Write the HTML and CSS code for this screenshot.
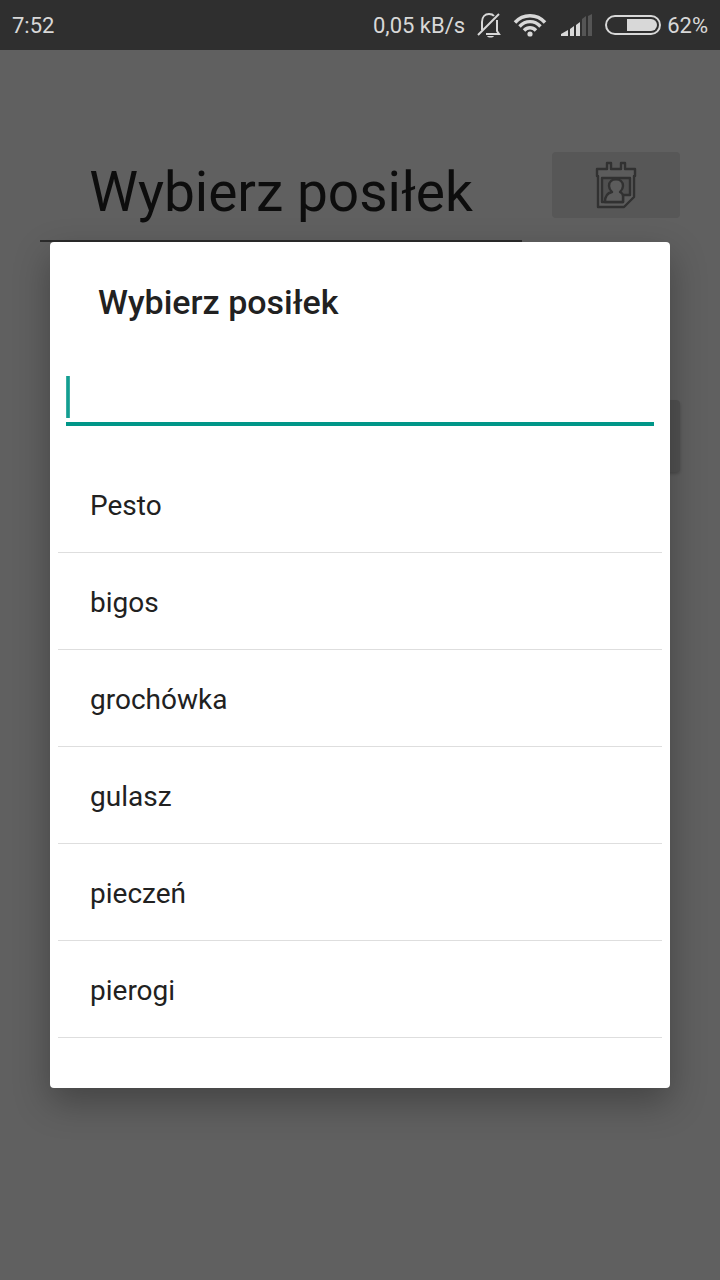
FILE: index.html
```html
<!DOCTYPE html>
<html lang="pl">
<head>
<meta charset="utf-8">
<meta name="viewport" content="width=device-width, initial-scale=1">
<title>Wybierz posiłek</title>
<link rel="stylesheet" href="styles.css">
</head>
<body>
<div class="screen">
  <header class="status">
    <span>7:52</span>
    <div class="status-right">
      <span>0,05 kB/s</span>
      <svg class="bell" width="26" height="26" viewBox="0 0 26 26" fill="none" stroke="#d8d8d8" stroke-width="2">
        <path d="M5 18V10C5 5 8 2 12 2c2 0 4 .6 5 2M20 8v11l2 3H9M1 23 22 2"/>
        <path d="M10 24h7c-1 2-6 2-7 0z" fill="#d8d8d8" stroke="none"/>
      </svg>
      <svg class="wifi" width="34" height="24" viewBox="0 0 34 24" fill="none" stroke="#d8d8d8" stroke-width="3.400">
        <path d="M2 9.500C10 .5 24 .5 32 9.500M6.500 13.500c6-6.500 15-6.500 21 0M11 17.500c3.500-3.700 8.500-3.700 12 0"/>
        <circle cx="17" cy="21" r="2.600" fill="#d8d8d8" stroke="none"/>
      </svg>
      <svg class="signal" width="32" height="22" viewBox="0 0 32 22">
        <path d="M0 22v-2l7-4v6zM9 22v-7l4-3v10zM15 22V11l4-3v14z" fill="#d8d8d8"/>
        <path d="M21 22V5l4-3v20zM27 22V2l4-2v22z" fill="#555"/>
      </svg>
      <svg class="battery" width="56" height="20" viewBox="0 0 56 20">
        <rect x="1" y="1" width="54" height="18" rx="9" fill="none" stroke="#d8d8d8" stroke-width="2"/>
        <path d="M22 4h24a6 6 0 0 1 0 12H22z" fill="#d8d8d8"/>
      </svg>
      <span>62%</span>
    </div>
  </header>

  <main class="page">
    <div class="meal-row">
      <input class="meal" type="text" value="Wybierz posiłek" aria-label="Posiłek" readonly>
      <button class="pick" type="button" aria-label="Wybierz datę">
        <svg width="42" height="50" viewBox="0 0 42 50" fill="none" stroke="#313131" stroke-width="2.400" stroke-linejoin="round">
          <path d="M2 9h10V3h4v6h10V3h4v6h10v7h-1v21l-10 10H3V16H2z" fill="#5c5c5c"/>
          <path d="M7 18h28v17h-7v7H7z" fill="#505050"/>
          <path d="M10 42c0-5 2-9 7-10-2-2-3-4-3-6 0-9 14-9 14 0 0 2-1 4-3 6 2 1 3 2 3 4v6z" fill="#5c5c5c"/>
        </svg>
      </button>
    </div>
    <button class="action" type="button" aria-label="Dodaj"></button>
  </main>

  <div class="overlay">
    <section class="dialog" role="dialog" aria-labelledby="dialog-title">
      <h2 class="dialog-title" id="dialog-title">Wybierz posiłek</h2>
      <input class="search" type="text" aria-label="Szukaj">
      <ul class="list">
        <li class="item">Pesto</li>
        <li class="item">bigos</li>
        <li class="item">grochówka</li>
        <li class="item">gulasz</li>
        <li class="item">pieczeń</li>
        <li class="item">pierogi</li>
      </ul>
    </section>
  </div>
</div>
</body>
</html>
```

FILE: styles.css
```css
* {
  box-sizing: border-box;
}

body {
  margin: 0;
  font-family: Roboto, "Noto Sans", sans-serif;
  color: #212121;
}

.screen {
  position: relative;
  min-height: 100vh;
  background: #606060;
}

.status {
  display: flex;
  align-items: center;
  justify-content: space-between;
  height: 50px;
  padding: 0 12px;
  background: #2f2f2f;
  color: #d8d8d8;
  font-size: 22px;
  line-height: 32px;
}

.status span {
  padding-top: 2px;
}

.status-right {
  display: flex;
  align-items: center;
}

.bell {
  margin: 0 10px 0 12px;
}

.signal {
  margin: 0 12px 0 14px;
}

.battery {
  margin-right: 6px;
}

.page {
  padding: 92px 40px 0;
}

.meal-row {
  display: flex;
  align-items: flex-start;
  gap: 30px;
}

.meal {
  flex: 1;
  min-width: 0;
  height: 100px;
  padding: 2px 0 0;
  border: 0;
  border-bottom: 2px solid #2b2b2b;
  background: transparent;
  color: #0d0d0d;
  font: 400 55px/64px Roboto, "Noto Sans", sans-serif;
  text-align: center;
  outline: 0;
}

.pick {
  display: flex;
  align-items: center;
  justify-content: center;
  width: 128px;
  height: 66px;
  margin-top: 10px;
  padding: 0;
  border: 0;
  border-radius: 4px;
  background: #575757;
}

.action {
  display: block;
  width: 160px;
  height: 72px;
  margin: 158px 0 0 auto;
  border: 0;
  border-radius: 4px;
  background: #525252;
  box-shadow: 0 2px 3px rgba(0, 0, 0, 0.2);
}

.overlay {
  position: absolute;
  inset: 50px 0 0;
  display: flex;
  align-items: center;
  padding: 0 50px;
}

.dialog {
  width: 100%;
  padding: 36px 8px 50px;
  border-radius: 4px;
  background: #fff;
  box-shadow: 0 14px 36px rgba(0, 0, 0, 0.3);
}

.dialog-title {
  margin: 0 40px;
  font-size: 34px;
  font-weight: 500;
  line-height: 48px;
}

.search {
  display: block;
  width: calc(100% - 16px);
  height: 50px;
  margin: 50px 8px 30px;
  padding: 0 4px 4px;
  border: 0;
  border-bottom: 4px solid #009688;
  background: linear-gradient(90deg, #4db6ac, #009688, #4db6ac) 0 0 / 4px 42px no-repeat;
  font: 400 36px/42px Roboto, "Noto Sans", sans-serif;
  outline: 0;
}

.list {
  margin: 0;
  padding: 0;
  list-style: none;
}

.item {
  padding: 34px 32px 30px;
  border-bottom: 1px solid #dedede;
  font-size: 28px;
  line-height: 32px;
}
```
